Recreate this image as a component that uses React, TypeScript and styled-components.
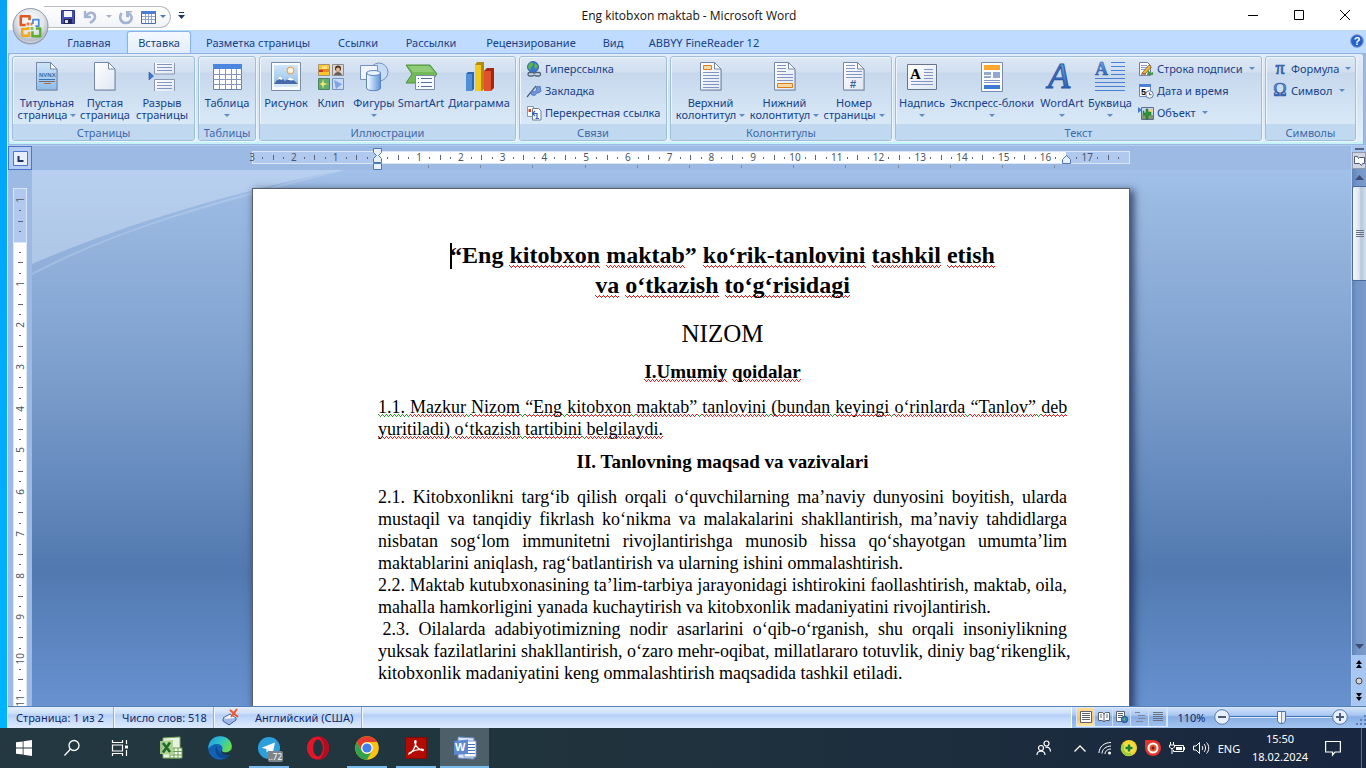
import React from "react";
import styled, { createGlobalStyle, css } from "styled-components";

const ui = '"Noto Sans", "Open Sans", sans-serif';
const segoe = '"Open Sans", "Noto Sans", sans-serif';
const navy = "#15428b";

const GlobalStyle = createGlobalStyle`
  * { box-sizing: border-box; }
  html, body, #root { height: 100%; }
  body { margin: 0; overflow: hidden; font-family: ${ui}; font-size: 11px; }
  button { font: inherit; color: inherit; background: none; border: 0; padding: 0; margin: 0; }
  h1, h2, p { margin: 0; }
  svg { display: block; flex: none; overflow: visible; }
`;

/* ---------- shell ---------- */

const Screen = styled.div`
  display: flex;
  flex-direction: column;
  height: 100vh;
  min-height: 480px;
  overflow: hidden;
`;
const Desktop = styled.div`
  flex: 1;
  min-height: 0;
  display: flex;
  padding-left: 7px;
  background: linear-gradient(#0aa2f6, #00a8fb 30%, #00b4ff);
`;
const Win = styled.div`
  flex: 1;
  min-width: 0;
  display: flex;
  flex-direction: column;
  border-left: 1px solid #e6f3ff;
  background: #9cb9e2;
`;

/* ---------- title bar ---------- */

const TitleBar = styled.header`
  position: relative;
  display: flex;
  align-items: center;
  height: 30px;
  background: #fff;
`;
const Orb = styled.button`
  position: absolute;
  left: 4px;
  top: 8px;
  z-index: 2;
`;
const QuickBar = styled.div`
  display: flex;
  align-items: center;
  height: 22px;
  width: 127px;
  margin: 3px 0 0 36px;
  padding-left: 16px;
  border: 1px solid #b9bcc2;
  border-left: 0;
  border-radius: 0 11px 11px 0;
  background: linear-gradient(#fff, #f1f3f6);
`;
const QuickButton = styled.button<{ $w: number }>`
  display: flex;
  justify-content: center;
  align-items: center;
  width: ${(p) => p.$w}px;
  height: 18px;
`;
const Caption = styled.div`
  position: absolute;
  left: 50%;
  top: 8px;
  width: 240px;
  margin-left: -118px;
  text-align: center;
  font-family: ${segoe};
  font-size: 12px;
  line-height: 16px;
  color: #111;
`;
const CaptionButtons = styled.div`
  display: flex;
  margin-left: auto;
`;
const CaptionButton = styled.button`
  display: flex;
  justify-content: center;
  align-items: center;
  width: 46px;
  height: 30px;
  padding-left: 4px;
`;

/* ---------- ribbon ---------- */

const TabRow = styled.nav`
  display: flex;
  align-items: flex-end;
  height: 23px;
  padding: 0 2px 0 46px;
  background: #bfdbff;
`;
const Tab = styled.button<{ $w: number; $active?: boolean }>`
  width: ${(p) => p.$w}px;
  height: 22px;
  padding: 1px 0 0;
  color: ${navy};
  white-space: nowrap;
  ${(p) =>
    p.$active &&
    css`
      margin: 0 3px;
      padding: 0;
      border: 1px solid #8db2e3;
      border-bottom: 0;
      border-radius: 3px 3px 0 0;
      background: linear-gradient(#f4f9ff, #e3edf9);
      box-shadow: 0 0 2px #7be3f5;
    `}
`;
const Help = styled.button`
  margin: 0 0 5px auto;
`;
const Ribbon = styled.section`
  display: flex;
  gap: 3px;
  height: 91px;
  padding: 2px 3px;
  margin-right: 2px;
  border: 1px solid #8db2e3;
  border-bottom: 2px solid #c6f2fb;
  border-radius: 3px;
  background: linear-gradient(#e3ecf7, #d3e1f2 40%, #e0effb);
`;
const Group = styled.div<{ $w: number }>`
  display: flex;
  flex-direction: column;
  flex: none;
  width: ${(p) => p.$w}px;
  height: 85px;
  border: 1px solid #9ebfdb;
  border-radius: 3px;
  background: linear-gradient(#dee8f5, #d1dff0 15px, #c7d8ed 16px, #d9e9f8 68px);
  box-shadow: inset 1px 1px 0 #eef5fc, 1px 1px 0 #eef6fd;
  color: ${navy};
`;
const GroupBody = styled.div`
  flex: 1;
  display: flex;
  min-height: 0;
  padding: 3px 2px 0;
`;
const GroupLabel = styled.div`
  height: 16px;
  line-height: 17px;
  text-align: center;
  color: #3e6aaa;
  background: #c1d8f1;
  border-radius: 0 0 2px 2px;
`;
const BigBtn = styled.button<{ $w: number }>`
  display: flex;
  flex-direction: column;
  align-items: center;
  flex: none;
  width: ${(p) => p.$w}px;
  white-space: nowrap;
  line-height: 12px;
`;
const BigIcon = styled.span`
  height: 37px;
`;
const BigLine = styled.span`
  display: flex;
  align-items: center;
  gap: 3px;
  height: 12px;
`;
const SmallCol = styled.div`
  display: flex;
  flex-direction: column;
  padding-left: 4px;
`;
const SmallBtn = styled.button`
  flex: none;
  display: flex;
  align-items: center;
  gap: 3px;
  height: 22px;
  padding-bottom: 5px;
  white-space: nowrap;
`;
const Arrow = styled.i<{ $c?: string }>`
  width: 0;
  height: 0;
  border: 3px solid transparent;
  border-top-color: ${(p) => p.$c ?? "#5e8cc4"};
  border-bottom: 0;
`;
const SmallArrow = styled(Arrow)`
  margin-left: 3px;
`;

/* ---------- work area ---------- */

const Work = styled.div`
  flex: 1;
  min-height: 0;
  display: flex;
  margin-top: 1px;
  border-top: 1px solid #b3cbed;
`;
const VRulerCol = styled.div`
  display: flex;
  flex-direction: column;
  align-items: center;
  width: 24px;
  background: #9cbae3;
  overflow: hidden;
`;
const TabStop = styled.button`
  flex: none;
  display: flex;
  justify-content: center;
  align-items: center;
  width: 24px;
  height: 24px;
  margin-bottom: 18px;
  border: 1px solid #4a76cf;
  background: #b3cbef;
`;
const VRuler = styled.div`
  flex: 1;
  min-height: 0;
  width: 14px;
  padding-top: 6px;
  overflow: hidden;
  border: 1px solid #dbe6f7;
  border-bottom: 0;
  background: linear-gradient(#b1c9ee 53px, #dbe6f7 53px 54px, #fff 54px);
`;
const VMarks = styled.div`
  display: flex;
  flex-direction: column;
  height: 542px;
`;
const Mark = styled.span`
  flex: 1 1 0;
  min-width: 0;
  min-height: 0;
  display: flex;
  justify-content: center;
  align-items: center;
  font-size: 10px;
  line-height: 11px;
  color: #4d5667;
`;
const VNum = styled.b`
  font-weight: 400;
  writing-mode: vertical-rl;
  transform: rotate(180deg);
`;
const HNum = styled.b`
  font-weight: 400;
`;
const Tick = styled.i<{ $w: number; $h: number }>`
  flex: none;
  width: ${(p) => p.$w}px;
  height: ${(p) => p.$h}px;
  background: #5d6678;
`;
const Center = styled.div`
  flex: 1;
  min-width: 0;
  display: flex;
  flex-direction: column;
`;
const RulerRow = styled.div`
  display: flex;
  justify-content: center;
  flex: none;
  height: 24px;
  padding: 5px 1px 0 0;
  background: #9cbae3;
`;
const RulerBox = styled.div`
  position: relative;
  width: 878px;
`;
const RulerBar = styled.div`
  height: 13px;
  border: 1px solid #dbe6f7;
  background: linear-gradient(90deg, #b1c9ee 124px, #fff 124px 813px, #b1c9ee 813px);
`;
const HMarks = styled.div`
  display: flex;
  height: 11px;
  margin: 0 5px 0 -6px;
`;
const TabTicks = styled.div`
  display: flex;
  height: 3px;
  margin: 1px 75px 0 125px;
`;
const TabTick = styled.i`
  flex: 1;
  border-right: 1px solid #7d8ba5;
`;
const Indent = styled.div<{ $x: number; $y: number }>`
  position: absolute;
  left: ${(p) => p.$x}px;
  top: ${(p) => p.$y}px;
`;
const Canvas = styled.main`
  position: relative;
  flex: 1;
  min-height: 0;
  display: flex;
  justify-content: center;
  padding: 18px 1px 0 0;
  overflow: hidden;
  background: linear-gradient(#a1c0ea, #9ab9e2 36px, #7d9fcd 200px, #5279b0 400px, #6893d1 540px);
`;
const Swoosh = styled.svg`
  position: absolute;
  left: 0;
  top: 0;
`;
const Page = styled.article`
  position: relative;
  width: 878px;
  height: 1200px;
  padding: 51px 62px 0 125px;
  border: 1px solid #5b5f66;
  background: #fff;
  box-shadow: 3px 3px 8px 1px rgba(20, 35, 70, 0.75);
  font-family: "Liberation Serif", "Times New Roman", serif;
  font-size: 18px;
  line-height: 22px;
  color: #000;
`;
const Title = styled.h1`
  font-size: 24px;
  line-height: 30px;
  text-align: center;
`;
const Caret = styled.i`
  display: inline-block;
  width: 2px;
  height: 26px;
  margin-right: -2px;
  vertical-align: -6px;
  background: #000;
`;
const Nizom = styled.p`
  margin: 19px 0 12px;
  font-size: 25px;
  line-height: 30px;
  text-align: center;
`;
const Heading = styled.h2`
  margin: 11px 0 13px;
  font-size: 19px;
  line-height: 22px;
  text-align: center;
`;
const Line = styled.span<{ $fit?: "justify" | "left" | "full" }>`
  display: block;
  white-space: ${(p) => (p.$fit === "full" ? "nowrap" : "pre-wrap")};
  text-align: left;
  text-align-last: ${(p) => (p.$fit === "justify" ? "justify" : "left")};
`;
const Squiggle = styled.span<{ $c: string }>`
  background-repeat: repeat-x;
  background-size: 4px 1px;
  background-image: ${({ $c }) =>
    `linear-gradient(90deg, ${$c} 1px, transparent 1px),
     linear-gradient(90deg, transparent 1px, ${$c} 1px 2px, transparent 2px 3px, ${$c} 3px),
     linear-gradient(90deg, transparent 2px, ${$c} 2px 3px, transparent 3px)`};
  background-position: 0 calc(100% - 2px), 0 calc(100% - 1px), 0 100%;
`;

/* ---------- scroll bar ---------- */

const ScrollCol = styled.div`
  flex: none;
  display: flex;
  flex-direction: column;
  align-items: center;
  width: 15px;
  border-left: 1px solid #b9d0f0;
  background: linear-gradient(90deg, #5f84bb, #7394c6 5px, #7b9bcb);
  overflow: hidden;
`;
const SplitBox = styled.div`
  flex: none;
  display: flex;
  justify-content: center;
  align-items: center;
  width: 100%;
  height: 6px;
  background: #a8c6f2;
`;
const RulerToggle = styled.button`
  flex: none;
  display: flex;
  justify-content: center;
  align-items: center;
  width: 100%;
  height: 17px;
  border: 1px solid #8f99a9;
  background: #cfd6e2;
`;
const ScrollArrow = styled.button`
  flex: none;
  display: flex;
  justify-content: center;
  align-items: center;
  width: 100%;
  height: 17px;
`;
const Track = styled.div`
  flex: 1;
  min-height: 0;
  width: 100%;
`;
const Thumb = styled.div`
  display: flex;
  flex-direction: column;
  justify-content: center;
  align-items: center;
  gap: 1px;
  width: 100%;
  height: 95px;
  border: 1px solid #4d6a9d;
  border-right: 0;
  border-radius: 2px 0 0 2px;
  background: linear-gradient(90deg, #f4f7fb, #dfe7f0 6px, #b5c6dc 8px, #d5e0ee);
`;
const Grip = styled.i`
  width: 8px;
  height: 1px;
  background: #6b7482;
`;
const Browse = styled.div`
  flex: none;
  display: flex;
  flex-direction: column;
  justify-content: space-between;
  align-items: center;
  width: 100%;
  height: 51px;
  padding: 5px 0;
  background: #a8c6f2;
`;

/* ---------- status bar ---------- */

const Status = styled.footer`
  flex: none;
  display: flex;
  height: 22px;
  border-top: 1px solid #5680b8;
  background: linear-gradient(#e3eefd, #cfe1fa 6px, #b5d0f6 8px, #c4dafa 12px, #dceaff);
  color: #10296b;
`;
const Cell = styled.div<{ $w: number }>`
  display: flex;
  align-items: center;
  gap: 15px;
  width: ${(p) => p.$w}px;
  padding: 0 0 1px 8px;
  border-right: 1px solid #8fb1de;
  box-shadow: 1px 0 0 #f3f8ff;
  white-space: nowrap;
`;
const StatusRight = styled.div`
  display: flex;
  align-items: center;
  margin-left: auto;
  padding: 0 0 1px 4px;
  border-left: 1px solid #fff;
  background: linear-gradient(#d4e4fa, #a9c8f2 8px, #86aee4 10px, #a4c4f0);
`;
const Views = styled.div`
  display: flex;
  border: 1px solid #d9e8fc;
`;
const View = styled.button<{ $on?: boolean }>`
  display: flex;
  justify-content: center;
  align-items: center;
  width: 18px;
  height: 18px;
  border-right: 1px solid #cfe0f7;
  background: ${(p) => (p.$on ? "linear-gradient(#fbdc9a, #fbc35c 60%, #ffe9a6)" : "none")};
`;
const ZoomText = styled.button`
  width: 46px;
  padding-left: 1px;
  text-align: center;
`;
const RoundBtn = styled.button`
  width: 16px;
  height: 16px;
`;
const Slider = styled.input`
  appearance: none;
  width: 102px;
  height: 16px;
  margin: 0;
  background: linear-gradient(transparent 7px, #4674b8 7px 8px, #dbe9fb 8px 9px, transparent 9px);
  &::-webkit-slider-thumb {
    appearance: none;
    width: 9px;
    height: 13px;
    border: 1px solid #55709c;
    border-radius: 1px 1px 5px 5px;
    background: linear-gradient(90deg, #fff 3px, #7992b8 3px 4px, #e2ebf7 4px);
  }
`;
const Corner = styled.span`
  align-self: flex-end;
  margin: 0 0 2px 8px;
`;

/* ---------- taskbar ---------- */

const Taskbar = styled.div`
  flex: none;
  display: flex;
  align-items: stretch;
  height: 40px;
  background: linear-gradient(90deg, #233840, #20343d 40%, #1c2c3e 75%, #192640);
  color: #fff;
`;
const TaskBtn = styled.button<{ $w: number; $run?: boolean; $on?: boolean }>`
  position: relative;
  display: flex;
  justify-content: center;
  align-items: center;
  width: ${(p) => p.$w}px;
  background: ${(p) => (p.$on ? "#4d5f69" : "none")};
  &::after {
    content: "";
    position: absolute;
    bottom: 0;
    left: ${(p) => (p.$on ? 0 : 5)}px;
    right: ${(p) => (p.$on ? 0 : 4)}px;
    height: ${(p) => (p.$run ? 2 : 0)}px;
    background: #78b9ee;
  }
`;
const Gap = styled.span`
  width: 2px;
`;
const Badge = styled.span`
  position: absolute;
  right: 10px;
  top: 23px;
  padding: 0 1px;
  border-radius: 2px;
  font-size: 8px;
  line-height: 11px;
  background: #7d8489;
`;
const Tray = styled.div`
  display: flex;
  margin-left: auto;
`;
const TrayBtn = styled.button<{ $w: number }>`
  display: flex;
  justify-content: center;
  align-items: center;
  width: ${(p) => p.$w}px;
`;
const Clock = styled(TrayBtn)`
  flex-direction: column;
  line-height: 18px;
`;
const NoticeBtn = styled(TrayBtn)`
  padding-right: 10px;
`;
const Peek = styled.i`
  width: 5px;
  border-left: 1px solid #66707f;
`;

/* ---------- icons ---------- */

const HiddenDefs = styled.svg`
  position: absolute;
`;
const Defs = () => (
  <HiddenDefs width="0" height="0" aria-hidden="true">
    <defs>
      <linearGradient id="paper" x1="0" y1="0" x2="1" y2="1">
        <stop offset="0" stopColor="#fff" /><stop offset="1" stopColor="#dfe6f2" />
      </linearGradient>
      <linearGradient id="blue" x1="0" y1="0" x2="0" y2="1">
        <stop offset="0" stopColor="#7fb0f0" /><stop offset="1" stopColor="#1e50a8" />
      </linearGradient>
      <linearGradient id="sky" x1="0" y1="0" x2="0" y2="1">
        <stop offset="0" stopColor="#cfe6fa" /><stop offset="1" stopColor="#8cbce8" />
      </linearGradient>
      <linearGradient id="cyl" x1="0" y1="0" x2="1" y2="0">
        <stop offset="0" stopColor="#fff" /><stop offset=".5" stopColor="#a9cbf2" /><stop offset="1" stopColor="#5f93d6" />
      </linearGradient>
      <radialGradient id="orb" cx=".5" cy=".35" r=".7">
        <stop offset="0" stopColor="#fff" /><stop offset=".55" stopColor="#dfe4ea" /><stop offset=".8" stopColor="#b4bdc9" /><stop offset="1" stopColor="#e8edf3" />
      </radialGradient>
      <linearGradient id="edge" x1="0" y1="0" x2="1" y2=".5">
        <stop offset="0" stopColor="#1f9be0" /><stop offset=".55" stopColor="#2fc3c8" /><stop offset="1" stopColor="#64dc50" />
      </linearGradient>
    </defs>
  </HiddenDefs>
);

const Doc = ({ children, fill = "url(#paper)" }: { children?: React.ReactNode; fill?: string }) => (
  <svg width="32" height="32" viewBox="0 0 32 32">
    <path d="M6 3h14l7 7v21H6z" fill="#8995aa" opacity=".45" />
    <path d="M5.500 2.500h14l6.500 6.500v21H5.500z" fill={fill} stroke="#7587a6" />
    <path d="M19.500 2.500v6.500h6.500z" fill="#fff" stroke="#7587a6" />
    {children}
  </svg>
);
const lines = (x1: number, x2: number, ys: number[], c = "#8095c4") =>
  ys.map((y) => <path key={y} d={`M${x1} ${y + 0.5}H${x2}`} stroke={c} />);

const CoverIcon = () => (
  <Doc fill="url(#sky)">
    <text x="8" y="17" fontSize="6" fontWeight="700" fill="#3f6ca8" fontFamily="Liberation Sans">NVNX</text>
    {lines(8, 24, [19], "#3b73b8")}
    {lines(8, 24, [21], "#7a6a6a")}
    {lines(13, 20, [23], "#b06a50")}
  </Doc>
);
const BreakIcon = () => (
  <svg width="32" height="32" viewBox="0 0 32 32">
    <path d="M8.500 3v11h20V3" fill="url(#paper)" stroke="#8a98b3" />
    <path d="M8.500 31V19.500h20V31" fill="url(#paper)" stroke="#8a98b3" />
    {lines(11, 26, [4, 7, 10, 22, 25, 28])}
    <path d="M3 12l4.500 4L3 20z" fill="#3d74cc" stroke="#2a55a0" strokeWidth=".6" />
  </svg>
);
const TableIcon = () => (
  <svg width="32" height="32" viewBox="0 0 32 32">
    <path d="M2.500 4.500h28v25h-28z" fill="#fff" stroke="#6f83a8" />
    <path d="M2 4h29v5H2z" fill="#4a86e0" />
    <path d="M2 14.500h29M2 19.500h29M2 24.500h29M8.500 9v20M14.500 9v20M20.500 9v20M25.500 9v20" stroke="#8497b8" />
  </svg>
);
const QuickTableIcon = () => (
  <svg width="15" height="14" viewBox="0 0 15 14">
    <path d="M.5 1.500h14v12H.5z" fill="#fff" stroke="#4a6db0" />
    <path d="M0 1h15v3H0z" fill="#4a7ed6" />
    <path d="M1 6.500h13M1 9.500h13M4.500 4v9M7.500 4v9M10.500 4v9" stroke="#8fa5cd" />
  </svg>
);
const PictureIcon = () => (
  <svg width="32" height="32" viewBox="0 0 32 32">
    <path d="M1.500 2.500h29v28h-29z" fill="#f8fbff" stroke="#7d8ca6" />
    <path d="M4 5h24v22H4z" fill="url(#sky)" />
    <circle cx="20.500" cy="10.500" r="3.500" fill="#fff3d6" stroke="#f09040" />
    <path d="M4 24l6-8 5 5 5-4 8 7z" fill="#456aa5" />
    <path d="M7 20l3-4 3 3-2 1-1-1zM17 19.500l3-2.500 4 3-3 .5z" fill="#fff" />
    <path d="M4 24h24v3H4z" fill="#d5e6f6" />
  </svg>
);
const ClipIcon = () => (
  <svg width="32" height="32" viewBox="0 0 32 32">
    <path d="M3.500 4.500h11v11h-11z" fill="#ffc52e" stroke="#a59272" />
    <path d="M4 9h10v3H4z" fill="#e58a1c" /><path d="M7 6h5v3H7z" fill="#ffe27a" /><path d="M4 10h4v2H4z" fill="#c73b1d" />
    <path d="M17.500 4.500h11v11h-11z" fill="#dcd7d0" stroke="#8b8b8b" />
    <circle cx="23" cy="8.500" r="3" fill="#4a2f22" /><circle cx="23" cy="9.500" r="2" fill="#f0b88c" /><path d="M19 15c1-4 7-4 8 0z" fill="#6a5a58" />
    <path d="M3.500 18.500h11v11h-11z" fill="#61ad70" stroke="#4d8460" />
    <path d="M8 19l1 4 4 1-4 1-1 4-1-4-3-1 3-1z" fill="#f5e86a" />
    <path d="M17.500 18.500h11v11h-11z" fill="#c9dbf7" stroke="#7894c4" />
    <path d="M19 20l8 4-6 5z" fill="#5d8ed8" opacity=".7" />
  </svg>
);
const ShapesIcon = () => (
  <svg width="32" height="32" viewBox="0 0 32 32">
    <circle cx="21" cy="12" r="9" fill="#c4dcf6" stroke="#7691bd" />
    <path d="M2.500 5.500h17v14h-17z" fill="#f0f6fe" stroke="#7691bd" />
    <path d="M8.500 13v15c0 3.500 14 3.500 14 0V13z" fill="url(#cyl)" stroke="#5a82bb" />
    <ellipse cx="15.500" cy="13" rx="7" ry="2.500" fill="#e8f3ff" stroke="#5a82bb" />
  </svg>
);
const SmartArtIcon = () => (
  <svg width="34" height="32" viewBox="0 0 34 32">
    <path d="M2 5h24l7 9-7 9H2l6-9z" fill="#72b957" stroke="#4f9140" />
    <path d="M4 6h21l5 6H9z" fill="#9cd384" opacity=".7" />
    <path d="M11.500 15.500h19v14h-19z" fill="#f7fafe" stroke="#7d8ca6" />
    {lines(17, 28, [18, 22, 26], "#5a6f9a")}
    {lines(14, 15, [18, 22, 26], "#3d5a99")}
  </svg>
);
const ChartIcon = () => (
  <svg width="32" height="32" viewBox="0 0 32 32">
    <path d="M3 14l2-2h6v17l-2 2H3z" fill="#2d66ae" /><path d="M3 14h6v17H3z" fill="#4f8fd6" />
    <path d="M12 5l2-3h7v27l-2 2h-7z" fill="#b48b0c" /><path d="M12 5h6v26h-6z" fill="#f3c91e" />
    <path d="M21 11l3-3h7v20l-3 3h-7z" fill="#a82410" /><path d="M21 11h7v20h-7z" fill="#e2502e" />
  </svg>
);
const HeaderIcon = ({ foot = false }: { foot?: boolean }) => (
  <Doc>
    {foot ? (
      <>{lines(8, 17, [5, 8, 11])}{lines(8, 24, [14, 17, 20])}<path d="M8.500 23.500h15v4h-15z" fill="#fbd9a5" stroke="#d97f1c" /></>
    ) : (
      <>{lines(8, 24, [12, 15, 18, 21, 24, 27])}<path d="M8.500 5.500h8v4h-8z" fill="#fbd9a5" stroke="#d97f1c" /></>
    )}
  </Doc>
);
const PageNoIcon = () => (
  <Doc>{lines(8, 17, [5, 8])}{lines(8, 24, [11, 14, 17])}
    <text x="12" y="28" fontSize="11" fontWeight="700" fill="#3d5f9e" fontFamily="Liberation Sans">#</text></Doc>
);
const TextBoxIcon = () => (
  <svg width="32" height="32" viewBox="0 0 32 32">
    <path d="M1.500 4.500h29v25h-29z" fill="url(#paper)" stroke="#66758f" />
    <text x="4" y="19" fontSize="15" fontWeight="700" fontFamily="Liberation Serif">A</text>
    {lines(18, 27, [9, 12, 15, 18])}{lines(5, 27, [21, 24])}
  </svg>
);
const PartsIcon = () => (
  <svg width="32" height="32" viewBox="0 0 32 32">
    <path d="M5.500 2.500h21v29h-21z" fill="#fbfdff" stroke="#7d8ca6" />
    <path d="M8 5h16v5H8z" fill="#fba62f" /><path d="M8 12h7v3H8zM17 12h7v6h-7zM8 16h7v2H8z" fill="#93a9cf" />
    {lines(8, 24, [20, 22])}<path d="M8 25h16v4H8z" fill="#3f7bd4" />
  </svg>
);
const WordArtIcon = () => (
  <svg width="32" height="32" viewBox="0 0 32 32">
    <text x="2" y="28" fontSize="36" fontStyle="italic" fontFamily="Liberation Serif" fill="url(#blue)" stroke="#2b5ba8" strokeWidth="1.200">A</text>
  </svg>
);
const DropCapIcon = () => (
  <svg width="32" height="32" viewBox="0 0 32 32">
    <text x="1" y="15" fontSize="18" fontWeight="700" fontFamily="Liberation Serif" fill="url(#blue)" stroke="#2b5ba8" strokeWidth=".5">A</text>
    {lines(17, 31, [2, 6, 10, 14], "#4a80d4")}{lines(1, 31, [18, 22, 26, 30], "#4a80d4")}
  </svg>
);
const S = ({ children }: { children: React.ReactNode }) => <svg width="16" height="16" viewBox="0 0 16 16">{children}</svg>;
const LinkIcon = () => (
  <S><circle cx="7" cy="6" r="5.500" fill="#3b78d0" stroke="#2a5596" strokeWidth=".8" /><path d="M3 3c3-3 5-1 4 1s-3 2-2 4-3 0-3-2zM9 2l3 3-2 3-2-2z" fill="#59b84a" />
    <rect x="2" y="11.500" width="6" height="3.500" rx="1.700" fill="none" stroke="#55627a" strokeWidth="1.400" /><rect x="8.500" y="11.500" width="6" height="3.500" rx="1.700" fill="none" stroke="#55627a" strokeWidth="1.400" /><path d="M6 13.200h5" stroke="#c9d2df" /></S>
);
const BookmarkIcon = () => (
  <S><path d="M1 14l9-11" stroke="#4a5f85" strokeWidth="1.200" /><path d="M5 9c2-2 3 1 5-1l1-5c1 1 2 1 3 0l1 5c-2 3-4 1-5 3s-3 2-5 0z" fill="#6f97dc" stroke="#4468ad" strokeWidth=".8" /></S>
);
const XrefIcon = () => (
  <S><path d="M1.500 1.500h6v10h-6z" fill="#fff" stroke="#8896ae" /><path d="M2.500 4h2.500v3H2.500z" fill="#d9441f" />
    <path d="M6.500 3.500h6l2.500 2.500v9h-8.500z" fill="#fff" stroke="#6f7f9c" /><path d="M11 13V8.500H7M9 6L6.500 8.500 9 11M9.500 13.500h3.500" fill="none" stroke="#2e61c0" strokeWidth="1.200" /></S>
);
const SignIcon = () => (
  <S><path d="M1.500 1.500h8l3 3v10h-11z" fill="#fff" stroke="#6f7f9c" />{lines(3, 9, [4, 6, 8], "#8aa0cc")}<path d="M4 12l7-8 2.500 2L7 13z" fill="#f2b43a" stroke="#6c5220" strokeWidth=".7" /><path d="M10 9l3 3 2-1v3h-6z" fill="#3f9a46" /><path d="M3 13h5" stroke="#a03020" /></S>
);
const DateIcon = () => (
  <S><path d="M1.500 1.500h11v12h-11z" fill="#fff" stroke="#6f88b8" /><path d="M1 1h12v3H1z" fill="#4b82d8" /><text x="3" y="12" fontSize="9" fontWeight="700" fontFamily="Liberation Sans">5</text>
    <circle cx="11.500" cy="11.500" r="3.800" fill="#eef4fc" stroke="#6a7d9e" /><path d="M11.500 9.500v2.200h2" fill="none" stroke="#333" strokeWidth=".8" /></S>
);
const ObjectIcon = () => (
  <S><path d="M3.500 2.500h12v12h-12z" fill="#c8d8ea" stroke="#5d6f8c" /><path d="M4 10h11v4H4z" fill="#7f9a72" /><path d="M8 4h2v3h2v-1h1v4h-3v4H8v-4H5V6h1v2h2z" fill="#2c9a35" stroke="#17651f" strokeWidth=".5" /><circle cx="13" cy="5.500" r="1.500" fill="#ffd24a" /><path d="M0 2l4 3-4 3z" fill="#3f7bd4" /></S>
);
const GlyphIcon = ({ g }: { g: string }) => (
  <S><text x="8" y="13" textAnchor="middle" fontSize="18" fontFamily="Liberation Serif" fill="url(#blue)" stroke="#2b5ba8" strokeWidth=".7">{g}</text></S>
);
const OrbIcon = () => (
  <svg width="37" height="37" viewBox="0 0 38 38">
    <circle cx="19" cy="19.500" r="18" fill="#7d8796" opacity=".6" /><circle cx="19" cy="18.500" r="18" fill="url(#orb)" stroke="#8d98a8" />
    <g fill="none" strokeWidth="2.600" strokeLinejoin="round">
      <path d="M18 12.500V8.500H9v9h5" stroke="#e2571b" /><path d="M21.500 16.500v-4.500h6v6.500h-3.500" stroke="#4a8fe0" strokeWidth="1.800" />
      <path d="M15.500 21.500H10.500v7h7v-4" stroke="#f6a81c" /><path d="M21 24v5h8v-8h-4.500" stroke="#5fae2e" />
    </g>
    <path d="M15 15h3v3h-3zM19 15h2v3h-2z" fill="#e2571b" opacity=".8" /><path d="M15 19.500h3v3h-3z" fill="#f6a81c" /><path d="M19 19.500h3v3h-3z" fill="#8cc152" />
  </svg>
);
const SaveIcon = () => (
  <S><path d="M1.500 1.500h13v13h-13z" fill="#4650b4" stroke="#2a3388" /><path d="M4 2h8v6H4z" fill="#f6f8ff" /><path d="M4 10h8v5H4z" fill="#20264f" /><path d="M5 11h3v3H5z" fill="#dfe4f5" /></S>
);
const UndoIcon = () => <S><path d="M3 2v6h6" fill="none" stroke="#a3b4d2" strokeWidth="2.400" /><path d="M4 7c3-5 9-4 9 1 0 3-2 4-5 6" fill="none" stroke="#a3b4d2" strokeWidth="2.600" /></S>;
const RedoIcon = () => <S><path d="M3.500 4c-3 5-.5 10 4.500 10s8-6 3-9.500" fill="none" stroke="#a3b4d2" strokeWidth="2.600" /><path d="M8 2h6v1.500H11v5L8 8z" fill="#a3b4d2" /></S>;

/* view mode icons */
const v = "#5c6370";
const ViewPrint = () => <svg width="12" height="12" viewBox="0 0 12 12"><path d="M.5.5h11v11H.5z" fill="#fff" stroke={v} />{lines(2, 10, [2, 4, 6, 8], v)}</svg>;
const ViewRead = () => <svg width="12" height="12" viewBox="0 0 12 12"><path d="M6 2v9M.5 1.500h4L6 3l1.500-1.500h4v8h-4L6 11 4.500 9.500h-4z" fill="#fff" stroke={v} /><path d="M2 4h2M2 6h2M8 4h2M8 6h2" stroke={v} /></svg>;
const ViewWeb = () => <svg width="12" height="12" viewBox="0 0 12 12"><path d="M.5.500h8v10h-8z" fill="#fff" stroke={v} />{lines(2, 7, [2, 4, 6], v)}<circle cx="8.500" cy="8.500" r="3.200" fill="#3a7bc8" stroke="#2a5a80" /><path d="M7 8l2-1v3z" fill="#6ac05a" /></svg>;
const ViewOutline = () => <svg width="12" height="12" viewBox="0 0 12 12">{lines(1, 6, [1], "#7d8798")}{lines(4, 11, [4, 7], "#7d8798")}{lines(2, 9, [10], "#7d8798")}</svg>;
const ViewDraft = () => <svg width="12" height="12" viewBox="0 0 12 12">{lines(1, 11, [1, 3, 5, 7, 9], "#6a7484")}</svg>;

const Round = ({ plus = false }: { plus?: boolean }) => (
  <svg width="16" height="16" viewBox="0 0 16 16"><circle cx="8" cy="8" r="7.300" fill="#e6effb" stroke="#5b79aa" /><path d={plus ? "M4 8h8M8 4v8" : "M4 8h8"} stroke="#4c5d7c" strokeWidth="2" /></svg>
);

/* taskbar icons */
const I = ({ children }: { children: React.ReactNode }) => <svg width="24" height="24" viewBox="0 0 24 24">{children}</svg>;
const WinLogo = () => <svg width="16" height="16" viewBox="0 0 16 16" fill="#fff"><path d="M0 2.300L6.700 1.400v6.200H0zM7.500 1.300L16 0v7.600H7.500zM0 8.400h6.700v6.200L0 13.700zM7.500 8.400H16V16l-8.500-1.300z" /></svg>;
const SearchIcon = () => <svg width="18" height="18" viewBox="0 0 18 18" fill="none" stroke="#fff" strokeWidth="1.300"><circle cx="11" cy="6.500" r="5" /><path d="M7.300 10.300L1.500 16.500" /></svg>;
const TaskViewIcon = () => <svg width="18" height="18" viewBox="0 0 18 18" fill="none" stroke="#fff" strokeWidth="1.200"><path d="M1.500 1v2.500h10V1M1.500 17v-2.500h10V17M1.500 6h10v6h-10zM15.500 1v4M15.500 11v6" /><path d="M14 6.500h3v3h-3z" fill="#fff" stroke="none" /></svg>;
const ExcelIcon = () => <I><path d="M4 2l17-1v21H4z" fill="#e7f3df" stroke="#7cab5d" /><path d="M11 12h12v10H11z" fill="#f5fbf0" stroke="#6d9f52" /><path d="M11 15.500h12M11 19h12M15 12v10M19 12v10" stroke="#6d9f52" /><path d="M1 5l13-1v15L1 18z" fill="#a9d08c" opacity=".9" /><path d="M4 7l7 9M11 6.500L4 16.500" stroke="#1f6b2a" strokeWidth="2.600" /></I>;
const EdgeIcon = () => <I><circle cx="12" cy="12" r="11.800" fill="#1261b5" /><path d="M.5 10C2 3 7 .2 12 .2c7 0 11.800 4.800 11.800 10 0 4-3 6.300-6.500 6.300-3 0-4-1.500-3-3 1-2-1-5.500-5-5.500-4 0-7.500 2-8.800 5z" fill="url(#edge)" /><path d="M8.500 10c-3 4 0 12 7 12.500 3-.5 5-2 6.500-4.500-5 2.500-12 .5-13.500-8z" fill="#0c4a94" /><path d="M14.300 13.500c-1 1.500 0 3 3 3 2.500 0 4.500-1 5.600-2.500l1.100 2-2 2.500c-4 1.500-8 0-9-2.500-.4-1.200.5-2.200 1.300-2.500z" fill="#20343d" /></I>;
const TelegramIcon = () => <I><circle cx="12" cy="12" r="11" fill="#2ca0dc" /><path d="M4.500 11.700L18 6.500l-2.300 11-4-3-2 2-.4-3.500z" fill="#fff" /></I>;
const OperaIcon = () => <I><ellipse cx="12" cy="12" rx="11" ry="11.500" fill="#e3152b" /><path d="M12 .5c6 0 11 5 11 11.500S18 23.500 12 23.500c3-1 6-5 6-11.500S15 1.500 12 .5z" fill="#b00d20" /><ellipse cx="12" cy="12" rx="4.800" ry="8.500" fill="#20343d" /></I>;
const ChromeIcon = () => <I><circle cx="12" cy="12" r="11.800" fill="#fbc116" /><path d="M1.800 6A11.800 11.800 0 0 1 22.200 6H12a6 6 0 0 0-5.200 9z" fill="#e33b2e" /><path d="M1.800 6a11.800 11.800 0 0 0 10 17.800l5.400-8.800a6 6 0 0 1-10.400 0z" fill="#2fa24c" /><circle cx="12" cy="12" r="5.800" fill="#fff" /><circle cx="12" cy="12" r="4.600" fill="#3f7ff0" /></I>;
const AcrobatIcon = () => <svg width="22" height="22" viewBox="0 0 22 22"><path d="M.5.5h21v21H.5z" fill="#b30b00" stroke="#7d0b05" /><path d="M4 17c3-1 7-7 7-12.500 0-1.500-1.500-1-1.300.5.300 4 4.300 8 8 8.500 1.500 0 .5-1.500-1.500-1.300-4 .3-8 1.800-12 3.800z" fill="none" stroke="#fff" strokeWidth="1.300" /></svg>;
const WordIcon = () => <I><path d="M5 1l16 1v21L5 22z" fill="#dbe7f8" stroke="#6d8fc6" /><path d="M11 5h12v16H11z" fill="#fff" stroke="#7a96c4" />{lines(13, 22, [8, 11, 14, 17], "#4a77bb")}<path d="M1 5l14-1.500V18L1 19z" fill="#5b88cf" /><text x="2" y="15" fontSize="11" fontWeight="700" fill="#fff" fontFamily="Liberation Sans">W</text></I>;

/* ---------- composed parts ---------- */

type BigProps = { w: number; icon: React.ReactNode; a: string; b?: string; drop?: boolean };
const Big = ({ w, icon, a, b, drop }: BigProps) => (
  <BigBtn $w={w}>
    <BigIcon>{icon}</BigIcon>
    <BigLine>{a}</BigLine>
    {(b || drop) && <BigLine>{b}{drop && <Arrow />}</BigLine>}
  </BigBtn>
);
const Small = ({ icon, text, drop }: { icon: React.ReactNode; text: string; drop?: boolean }) => (
  <SmallBtn>{icon}{text}{drop && <SmallArrow />}</SmallBtn>
);
const RibbonGroup = ({ w, label, children }: { w: number; label: string; children: React.ReactNode }) => (
  <Group $w={w}><GroupBody>{children}</GroupBody><GroupLabel>{label}</GroupLabel></Group>
);

const tabs: [string, number][] = [
  ["Главная", 70], ["Вставка", 64], ["Разметка страницы", 128], ["Ссылки", 72],
  ["Рассылки", 74], ["Рецензирование", 126], ["Вид", 38], ["ABBYY FineReader 12", 144],
];

const marks = (cm: number, zero: number, vertical: boolean) =>
  Array.from({ length: cm * 4 }, (_, i) => {
    const n = Math.abs(zero - i / 4);
    if (i % 4 === 0) {
      const label = n === 0 ? "" : n;
      return <Mark key={i}>{vertical ? <VNum>{label}</VNum> : <HNum>{label}</HNum>}</Mark>;
    }
    const long = i % 2 === 0 ? 5 : 2;
    return <Mark key={i}><Tick $w={vertical ? long : 1} $h={vertical ? 1 : long} /></Mark>;
  });

const Red = ({ children }: { children: React.ReactNode }) => <Squiggle $c="#f01414">{children}</Squiggle>;
const Green = ({ children }: { children: React.ReactNode }) => <Squiggle $c="#1f9a1f">{children}</Squiggle>;

/* Misspelt words in red; with `grammar`, the gaps between them carry the green mark. */
const words = (text: string, grammar = false) =>
  text.split(" ").map((w, i) => (
    <React.Fragment key={i}>
      {i > 0 && (grammar ? <Green> </Green> : " ")}
      <Red>{w}</Red>
    </React.Fragment>
  ));

const aims: [string, "justify" | "left" | "full"][] = [
  ["2.1. Kitobxonlikni targ‘ib qilish orqali o‘quvchilarning ma’naviy dunyosini boyitish, ularda", "justify"],
  ["mustaqil va tanqidiy fikrlash ko‘nikma va malakalarini shakllantirish, ma’naviy tahdidlarga", "justify"],
  ["nisbatan sog‘lom immunitetni rivojlantirishga munosib hissa qo‘shayotgan umumta’lim", "justify"],
  ["maktablarini aniqlash, rag‘batlantirish va ularning ishini ommalashtirish.", "left"],
  ["2.2. Maktab kutubxonasining ta’lim-tarbiya jarayonidagi ishtirokini faollashtirish, maktab, oila,", "justify"],
  ["mahalla hamkorligini yanada kuchaytirish va kitobxonlik madaniyatini rivojlantirish.", "left"],
  ["\u20052.3. Oilalarda adabiyotimizning nodir asarlarini o‘qib-o‘rganish, shu orqali insoniylikning", "justify"],
  ["yuksak fazilatlarini shakllantirish, o‘zaro mehr-oqibat, millatlararo totuvlik, diniy bag‘rikenglik,", "full"],
  ["kitobxonlik madaniyatini keng ommalashtirish maqsadida tashkil etiladi.", "left"],
];

export default function App() {
  return (
    <Screen>
      <GlobalStyle />
      <Defs />
      <Desktop>
        <Win>
          <TitleBar>
            <Orb aria-label="Office"><OrbIcon /></Orb>
            <QuickBar>
              <QuickButton $w={16} aria-label="Сохранить"><SaveIcon /></QuickButton>
              <QuickButton $w={28} aria-label="Отменить"><UndoIcon /></QuickButton>
              <QuickButton $w={10} aria-label="Список отмены"><Arrow $c="#a9b4c6" /></QuickButton>
              <QuickButton $w={24} aria-label="Вернуть"><RedoIcon /></QuickButton>
              <QuickButton $w={20} aria-label="Таблица"><QuickTableIcon /></QuickButton>
              <QuickButton $w={10} aria-label="Список таблиц"><Arrow $c="#4d7ab5" /></QuickButton>
            </QuickBar>
            <QuickButton $w={20} aria-label="Настройка панели">
              <svg width="7" height="8" viewBox="0 0 7 8"><path d="M1 1.500h5" stroke="#1d3768" /><path d="M0 4h7L3.500 8z" fill="#1d3768" /></svg>
            </QuickButton>
            <Caption>Eng kitobxon maktab - Microsoft Word</Caption>
            <CaptionButtons>
              <CaptionButton aria-label="Свернуть"><svg width="10" height="10"><path d="M0 5.500h10" stroke="#000" /></svg></CaptionButton>
              <CaptionButton aria-label="Развернуть"><svg width="10" height="10"><path d="M.5.500h9v9h-9z" fill="none" stroke="#000" /></svg></CaptionButton>
              <CaptionButton aria-label="Закрыть"><svg width="10" height="10"><path d="M0 0l10 10M10 0L0 10" stroke="#000" /></svg></CaptionButton>
            </CaptionButtons>
          </TitleBar>

          <TabRow>
            {tabs.map(([t, w]) => <Tab key={t} $w={w} $active={t === "Вставка"}>{t}</Tab>)}
            <Help aria-label="Справка">
              <svg width="14" height="14" viewBox="0 0 14 14"><circle cx="7" cy="7" r="6.400" fill="#2560cc" stroke="#8fa6cc" /><text x="7" y="11" textAnchor="middle" fontSize="11" fontWeight="700" fill="#fff" fontFamily="Liberation Sans">?</text></svg>
            </Help>
          </TabRow>

          <Ribbon>
            <RibbonGroup w={183} label="Страницы">
              <Big w={64} icon={<CoverIcon />} a="Титульная" b="страница" drop />
              <Big w={52} icon={<Doc />} a="Пустая" b="страница" />
              <Big w={62} icon={<BreakIcon />} a="Разрыв" b="страницы" />
            </RibbonGroup>
            <RibbonGroup w={58} label="Таблицы">
              <Big w={52} icon={<TableIcon />} a="Таблица" drop />
            </RibbonGroup>
            <RibbonGroup w={257} label="Иллюстрации">
              <Big w={48} icon={<PictureIcon />} a="Рисунок" />
              <Big w={42} icon={<ClipIcon />} a="Клип" />
              <Big w={44} icon={<ShapesIcon />} a="Фигуры" drop />
              <Big w={50} icon={<SmartArtIcon />} a="SmartArt" />
              <Big w={66} icon={<ChartIcon />} a="Диаграмма" />
            </RibbonGroup>
            <RibbonGroup w={148} label="Связи">
              <SmallCol>
                <Small icon={<LinkIcon />} text="Гиперссылка" />
                <Small icon={<BookmarkIcon />} text="Закладка" />
                <Small icon={<XrefIcon />} text="Перекрестная ссылка" />
              </SmallCol>
            </RibbonGroup>
            <RibbonGroup w={222} label="Колонтитулы">
              <Big w={75} icon={<HeaderIcon />} a="Верхний" b="колонтитул" drop />
              <Big w={73} icon={<HeaderIcon foot />} a="Нижний" b="колонтитул" drop />
              <Big w={66} icon={<PageNoIcon />} a="Номер" b="страницы" drop />
            </RibbonGroup>
            <RibbonGroup w={367} label="Текст">
              <Big w={48} icon={<TextBoxIcon />} a="Надпись" drop />
              <Big w={92} icon={<PartsIcon />} a="Экспресс-блоки" drop />
              <Big w={48} icon={<WordArtIcon />} a="WordArt" drop />
              <Big w={48} icon={<DropCapIcon />} a="Буквица" drop />
              <SmallCol>
                <Small icon={<SignIcon />} text="Строка подписи" drop />
                <Small icon={<DateIcon />} text="Дата и время" />
                <Small icon={<ObjectIcon />} text="Объект" drop />
              </SmallCol>
            </RibbonGroup>
            <RibbonGroup w={91} label="Символы">
              <SmallCol>
                <Small icon={<GlyphIcon g="π" />} text="Формула" drop />
                <Small icon={<GlyphIcon g="Ω" />} text="Символ" drop />
              </SmallCol>
            </RibbonGroup>
          </Ribbon>

          <Work>
            <VRulerCol>
              <TabStop aria-label="Табуляция">
                <svg width="15" height="15" viewBox="0 0 15 15"><path d="M.5.500h14v14H.5z" fill="#e6effb" stroke="#4a76cf" /><path d="M5.500 5v5h5" fill="none" stroke="#1c3566" strokeWidth="2" /></svg>
              </TabStop>
              <VRuler><VMarks>{marks(13, 1, true)}</VMarks></VRuler>
            </VRulerCol>
            <Center>
              <RulerRow>
                <RulerBox>
                  <RulerBar><HMarks>{marks(21, 3, false)}</HMarks></RulerBar>
                  <TabTicks>{Array.from({ length: 13 }, (_, i) => <TabTick key={i} />)}</TabTicks>
                  <Indent $x={121} $y={-3}>
                    <svg width="9" height="22" viewBox="0 0 9 22" fill="#e8f0fb" stroke="#4d77b5"><path d="M.5.500h8v4l-3 3 3 3v4h-8v-4l3-3-3-3z" /><path d="M.5 15.500h8v6h-8z" /></svg>
                  </Indent>
                  <Indent $x={810} $y={3}>
                    <svg width="9" height="10" viewBox="0 0 9 10" fill="#e8f0fb" stroke="#4d77b5"><path d="M.5 9.500v-4l4-4 4 4v4z" /></svg>
                  </Indent>
                </RulerBox>
              </RulerRow>
              <Canvas>
                <Swoosh width="320" height="110" viewBox="0 0 320 110">
                  <path d="M0 0h310C200 22 90 55 0 94z" fill="#dbe9fa" opacity=".4" />
                  <path d="M0 104C80 62 170 35 310 0" fill="none" stroke="#dbe9fa" strokeWidth="2" opacity=".25" />
                </Swoosh>
                <Page>
                  <Title>
                    <Caret />“Eng <Red>kitobxon</Red> <Red>maktab</Red>” <Red>ko‘rik-tanlovini</Red> <Red>tashkil</Red> <Red>etish</Red>
                    <br />
                    <Red>va</Red> <Red>o‘tkazish</Red> <Red>to‘g‘risidagi</Red>
                  </Title>
                  <Nizom>NIZOM</Nizom>
                  <Heading>{words("I.Umumiy qoidalar")}</Heading>
                  <p>
                    <Line $fit="justify"><Green>1.1. </Green>{words("Mazkur Nizom “Eng kitobxon maktab” tanlovini (bundan keyingi o‘rinlarda “Tanlov” deb", true)}</Line>
                    <Line $fit="left">{words("yuritiladi) o‘tkazish tartibini belgilaydi.", true)}</Line>
                  </p>
                  <Heading>II. Tanlovning maqsad va vazivalari</Heading>
                  <p>{aims.map(([t, fit]) => <Line key={t} $fit={fit}>{t}</Line>)}</p>
                </Page>
              </Canvas>
            </Center>
            <ScrollCol>
              <SplitBox><Tick $w={9} $h={2} /></SplitBox>
              <RulerToggle aria-label="Линейка"><svg width="11" height="11" viewBox="0 0 11 11" fill="#fff" stroke="#4a5a80"><path d="M.5 1.500h3l1 2 1-1h5v6h-2l-1 2-2-2h-5z" /></svg></RulerToggle>
              <ScrollArrow aria-label="Вверх"><svg width="9" height="5"><path d="M0 5l4.500-5L9 5z" fill="#3d4f75" /></svg></ScrollArrow>
              <Track><Thumb><Grip /><Grip /><Grip /><Grip /></Thumb></Track>
              <ScrollArrow aria-label="Вниз"><svg width="9" height="5"><path d="M0 0h9L4.500 5z" fill="#3d4f75" /></svg></ScrollArrow>
              <Browse>
                <svg width="6" height="8" viewBox="0 0 6 8"><path d="M0 4l3-4 3 4zM0 8l3-4 3 4z" /></svg>
                <svg width="8" height="8"><circle cx="4" cy="4" r="3" fill="#d5d5d5" stroke="#444" /></svg>
                <svg width="6" height="8" viewBox="0 0 6 8"><path d="M0 0l3 4 3-4zM0 4l3 4 3-4z" /></svg>
              </Browse>
            </ScrollCol>
          </Work>

          <Status>
            <Cell $w={106}>Страница: 1 из 2</Cell>
            <Cell $w={100}>Число слов: 518</Cell>
            <Cell $w={148}>
              <svg width="18" height="16" viewBox="0 0 18 16"><path d="M1 9l7-4 6 4-7 5z" fill="#f6f9ff" stroke="#3d62a8" /><path d="M1 10v2l6 4 7-5V9" fill="#9db8e6" stroke="#3d62a8" /><path d="M8 1l8 7M15 0L9 8" stroke="#f0552c" strokeWidth="2" /></svg>
              Английский (США)
            </Cell>
            <StatusRight>
              <Views>
                <View $on aria-label="Разметка страницы"><ViewPrint /></View>
                <View aria-label="Режим чтения"><ViewRead /></View>
                <View aria-label="Веб-документ"><ViewWeb /></View>
                <View aria-label="Структура"><ViewOutline /></View>
                <View aria-label="Черновик"><ViewDraft /></View>
              </Views>
              <ZoomText>110%</ZoomText>
              <RoundBtn aria-label="Уменьшить"><Round /></RoundBtn>
              <Slider type="range" min={10} max={190} defaultValue={100} aria-label="Масштаб" />
              <RoundBtn aria-label="Увеличить"><Round plus /></RoundBtn>
              <Corner><svg width="10" height="10" fill="#5b7fb8"><path d="M8 0h2v2H8zM4 4h2v2H4zM8 4h2v2H8zM0 8h2v2H0zM4 8h2v2H4zM8 8h2v2H8z" /></svg></Corner>
            </StatusRight>
          </Status>
        </Win>
      </Desktop>

      <Taskbar>
        <TaskBtn $w={48} aria-label="Пуск"><WinLogo /></TaskBtn>
        <TaskBtn $w={48} aria-label="Поиск"><SearchIcon /></TaskBtn>
        <TaskBtn $w={48} aria-label="Представление задач"><TaskViewIcon /></TaskBtn>
        <Gap />
        <TaskBtn $w={49} aria-label="Excel"><ExcelIcon /></TaskBtn>
        <TaskBtn $w={49} aria-label="Edge"><EdgeIcon /></TaskBtn>
        <TaskBtn $w={49} $run aria-label="Telegram"><TelegramIcon /><Badge>..72</Badge></TaskBtn>
        <TaskBtn $w={49} aria-label="Opera"><OperaIcon /></TaskBtn>
        <TaskBtn $w={49} $run aria-label="Chrome"><ChromeIcon /></TaskBtn>
        <TaskBtn $w={49} $run aria-label="Acrobat"><AcrobatIcon /></TaskBtn>
        <TaskBtn $w={49} $run $on aria-label="Word"><WordIcon /></TaskBtn>
        <Tray>
          <TrayBtn $w={48} aria-label="Люди"><svg width="16" height="16" viewBox="0 0 16 16" fill="none" stroke="#fff" strokeWidth="1.200"><circle cx="5" cy="8" r="2.500" /><path d="M1 15c0-5 8-5 8 0" /><circle cx="10.500" cy="3.500" r="2.500" /><path d="M9.500 7.500c3-1 5 1 5 4" /></svg></TrayBtn>
          <TrayBtn $w={24} aria-label="Скрытые значки"><svg width="12" height="7" viewBox="0 0 12 7" fill="none" stroke="#fff" strokeWidth="1.300"><path d="M.5 6.500L6 1l5.500 5.500" /></svg></TrayBtn>
          <TrayBtn $w={25} aria-label="Сеть"><svg width="14" height="14" viewBox="0 0 14 14" fill="none" stroke="#fff"><path d="M1 12C1 6 6 1.500 13 1.500M4 12.500c0-4 4-7.500 9-7.500M7 13c0-3 3-5 6-5" /><circle cx="11.500" cy="12" r="1.500" fill="#fff" stroke="none" /></svg></TrayBtn>
          <TrayBtn $w={24} aria-label="Защита"><svg width="16" height="16" viewBox="0 0 16 16"><circle cx="8" cy="8" r="8" fill="#f6d52a" /><path d="M1 4a8 8 0 0 0 10 11.500L8 8z" fill="#9fcf3c" /><circle cx="8" cy="8" r="5" fill="#f3e350" /><path d="M8 4.500v7M4.500 8h7" stroke="#15803a" strokeWidth="2.400" /></svg></TrayBtn>
          <TrayBtn $w={24} aria-label="Запись"><svg width="16" height="16" viewBox="0 0 16 16"><path d="M0 0h8a8 8 0 1 1-8 8z" fill="#e5332a" /><circle cx="8" cy="8" r="5.500" fill="#fff" /><circle cx="8" cy="8" r="3.500" fill="#e5532a" /><circle cx="8" cy="8" r="1.500" fill="#7a1710" /></svg></TrayBtn>
          <TrayBtn $w={24} aria-label="Батарея"><svg width="16" height="12" viewBox="0 0 16 12" fill="none" stroke="#fff"><path d="M6 3.500h8.500v6H4.500V8M15.500 5v3M1.500 0v3M4.500 0v3M.5 3h5v2L4 6.500H2L.5 5zM3 6.500V12" /><path d="M7 5h6v3H7z" fill="#fff" stroke="none" /></svg></TrayBtn>
          <TrayBtn $w={24} aria-label="Громкость"><svg width="17" height="14" viewBox="0 0 17 14" fill="none" stroke="#fff"><path d="M.5 5v4H3l3.500 3.500v-11L3 5zM9 5c1 1 1 3 0 4M11 3c2 2 2 6 0 8M13.500 1.500c3 3 3 8 0 11" /></svg></TrayBtn>
          <TrayBtn $w={32}>ENG</TrayBtn>
          <Clock $w={70}><span>15:50</span><span>18.02.2024</span></Clock>
          <NoticeBtn $w={46} aria-label="Уведомления"><svg width="16" height="16" viewBox="0 0 16 16" fill="none" stroke="#fff" strokeWidth="1.200"><path d="M.6 1.500h14.800v10.500H10L7.500 15v-3H.6z" /></svg></NoticeBtn>
          <Peek />
        </Tray>
      </Taskbar>
    </Screen>
  );
}
